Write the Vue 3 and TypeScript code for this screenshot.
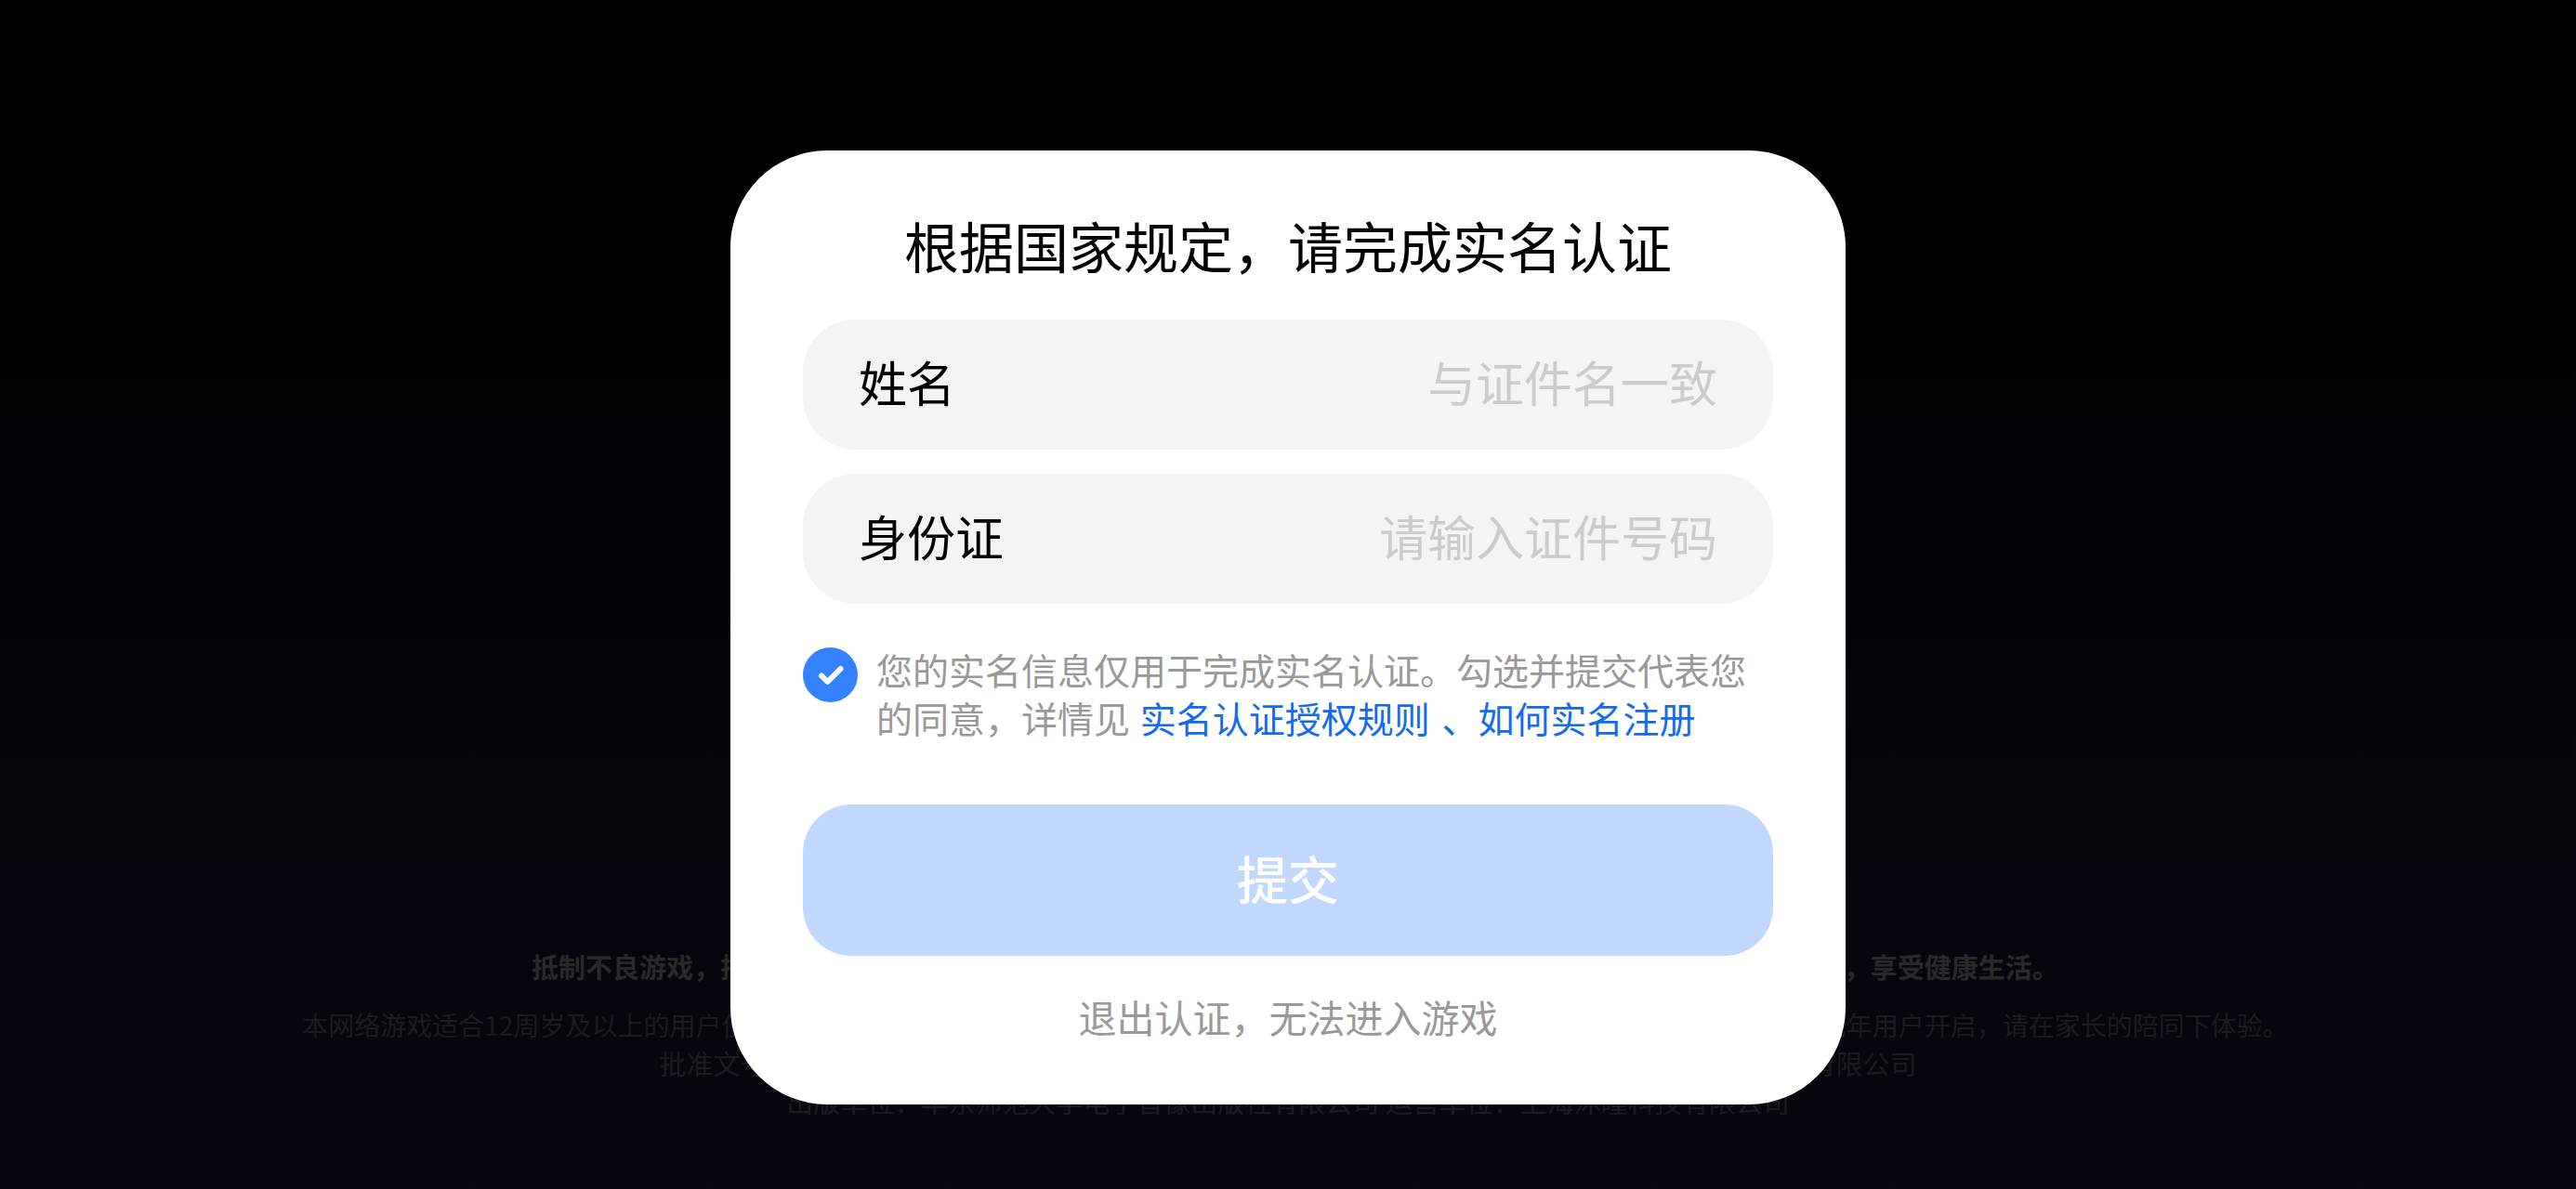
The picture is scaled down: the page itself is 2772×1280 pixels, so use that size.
<script setup lang="ts">
import { computed, ref } from 'vue'

const realName = ref('')
const idNumber = ref('')
const agreed = ref(true)

const ready = computed(
  () => agreed.value && realName.value.trim() !== '' && idNumber.value.trim() !== '',
)
</script>

<template>
  <div class="page">
    <footer class="notice">
      <p class="slogan trailing-stop">
        抵制不良游戏，拒绝盗版游戏。 注意自我保护，谨防受骗上当。 适度游戏益脑，沉迷游戏伤身。 合理安排时间，享受健康生活。
      </p>
      <p class="age trailing-stop">
        本网络游戏适合12周岁及以上的用户使用，为了您的健康成长，请合理安排游戏时间。 本游戏已接入防沉迷系统，本功能现均已为未成年用户开启，请在家长的陪同下体验。
      </p>
      <p>批准文号：国新出审[2016]1425号 出版物号：ISBN 978-7-7979-0946-4 著作权人：上海沐瞳科技有限公司</p>
      <p>出版单位：华东师范大学电子音像出版社有限公司 运营单位：上海沐瞳科技有限公司</p>
    </footer>

    <main class="card" role="dialog" aria-labelledby="card-title">
      <h1 id="card-title">根据国家规定，请完成实名认证</h1>

      <form @submit.prevent>
        <div class="fields">
          <div class="field">
            <label for="real-name">姓名</label>
            <input id="real-name" v-model="realName" type="text" placeholder="与证件名一致" />
          </div>
          <div class="field">
            <label for="id-number">身份证</label>
            <input id="id-number" v-model="idNumber" type="text" placeholder="请输入证件号码" />
          </div>
        </div>

        <div class="consent">
          <span class="tick">
            <input id="agree" v-model="agreed" type="checkbox" />
            <svg v-if="agreed" viewBox="0 0 59 59" aria-hidden="true">
              <path d="M20 30.500L26.500 37L40.500 23" />
            </svg>
          </span>
          <p>
            <label for="agree">您的实名信息仅用于完成实名认证。勾选并提交代表您的同意，详情见</label>{{ ' ' }}<a href="#rules">实名认证授权规则</a>{{ ' ' }}<a href="#register">、如何实名注册</a>
          </p>
        </div>

        <button class="submit" type="submit" :class="{ ready }">提交</button>
      </form>

      <button class="leave" type="button">退出认证，无法进入游戏</button>
    </main>
  </div>
</template>

<style>
body {
  margin: 0;
  background: #000;
}
</style>

<style scoped>
.page {
  position: relative;
  box-sizing: border-box;
  min-height: 100vh;
  padding: 162px 24px 91px;
  display: flex;
  justify-content: center;
  align-items: flex-start;
  overflow: hidden;
  background: linear-gradient(#000 0%, #000 25%, #05050d 75%, #080811 100%);
  font-family: "Noto Sans CJK SC", "Noto Sans", sans-serif;
}

.notice {
  position: absolute;
  left: 0;
  right: 0;
  bottom: 74px;
  color: #1c1c20;
  font-size: 29px;
  line-height: 41px;
  text-align: center;
  white-space: nowrap;
}

.notice p {
  margin: 0;
}

.notice .slogan {
  margin-bottom: 22px;
  color: #29292c;
  font-weight: 700;
}

.notice .age {
  font-size: 28px;
}

/* balances the blank half of the closing full stop */
.notice .trailing-stop {
  padding-left: 16px;
}

.card {
  position: relative;
  box-sizing: border-box;
  width: 1200px;
  max-width: 100%;
  padding: 68px 78px 70px;
  border-radius: 104px;
  background: #fff;
  display: flex;
  flex-direction: column;
}

h1 {
  margin: 0 0 46px;
  color: #000;
  font-size: 59px;
  font-weight: 400;
  line-height: 68px;
  text-align: center;
}

.fields {
  display: flex;
  flex-direction: column;
  gap: 26px;
}

.field {
  box-sizing: border-box;
  display: flex;
  align-items: center;
  height: 140px;
  padding: 0 60px 6px;
  border-radius: 56px;
  background: #f4f4f4;
  font-size: 52px;
  line-height: 68px;
}

.field label {
  flex: none;
  color: #000;
}

.field input {
  flex: 1;
  min-width: 0;
  height: 68px;
  padding: 0;
  border: 0;
  outline: 0;
  background: none;
  color: #000;
  font: inherit;
  text-align: right;
}

.field input::placeholder {
  color: #ccc;
  opacity: 1;
}

.consent {
  display: flex;
  align-items: flex-start;
  gap: 20px;
  margin: 44px 0 68px;
}

.consent p {
  flex: 1;
  margin: 0;
  color: #999;
  font-size: 39px;
  line-height: 52px;
}

.consent a {
  margin: 0 2px;
  color: #146cec;
  text-decoration: none;
}

.tick {
  position: relative;
  flex: none;
  width: 59px;
  height: 59px;
  margin-top: 3px;
}

.tick input {
  display: block;
  appearance: none;
  width: 100%;
  height: 100%;
  margin: 0;
  border: 2px solid #ccc;
  border-radius: 50%;
}

.tick input:checked {
  border-color: #3482ff;
  background: #3482ff;
}

.tick svg {
  position: absolute;
  inset: 0;
  pointer-events: none;
  fill: none;
  stroke: #fff;
  stroke-width: 6;
  stroke-linecap: round;
  stroke-linejoin: round;
}

button {
  border: 0;
  font-family: inherit;
  cursor: pointer;
}

.submit {
  display: block;
  width: 100%;
  height: 163px;
  padding: 0 0 8px;
  border-radius: 52px;
  background: #c1d8ff;
  color: #fff;
  font-size: 55px;
  font-weight: 500;
}

.submit.ready {
  background: #3482ff;
}

.leave {
  align-self: center;
  margin-top: 40px;
  padding: 0;
  background: none;
  color: #999;
  font-size: 41px;
  line-height: 50px;
}
</style>
